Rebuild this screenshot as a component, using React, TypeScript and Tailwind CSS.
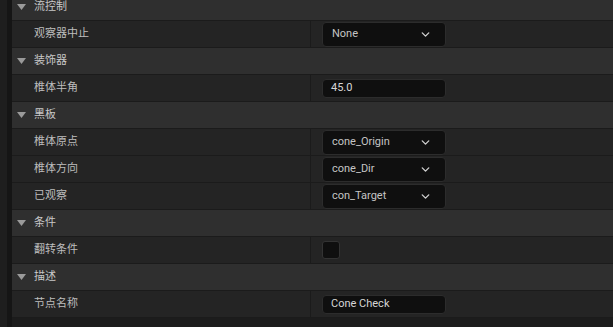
import { ChevronDown } from 'lucide-react';

type Row =
  | { kind: 'select'; label: string; value: string }
  | { kind: 'text'; label: string; value: string }
  | { kind: 'check'; label: string };

type Section = { title: string; rows: Row[] };

const sections: Section[] = [
  { title: '流控制', rows: [{ kind: 'select', label: '观察器中止', value: 'None' }] },
  { title: '装饰器', rows: [{ kind: 'text', label: '椎体半角', value: '45.0' }] },
  {
    title: '黑板',
    rows: [
      { kind: 'select', label: '椎体原点', value: 'cone_Origin' },
      { kind: 'select', label: '椎体方向', value: 'cone_Dir' },
      { kind: 'select', label: '已观察', value: 'con_Target' },
    ],
  },
  { title: '条件', rows: [{ kind: 'check', label: '翻转条件' }] },
  { title: '描述', rows: [{ kind: 'text', label: '节点名称', value: 'Cone Check' }] },
];

const font = "font-['Roboto','Noto_Sans_CJK_SC',sans-serif]";

function Value({ row }: { row: Row }) {
  if (row.kind === 'select') {
    return (
      <div className="flex h-[25px] w-[124px] items-center justify-between rounded-[4px] border border-[#2c2c2c] bg-[#0f0f0f] pr-[13px] pl-[9px] text-[11px] text-[#c4c4c4]">
        <span>{row.value}</span>
        <ChevronDown className="size-[13px] text-[#cfcfcf]" strokeWidth={2.5} />
      </div>
    );
  }

  if (row.kind === 'text') {
    return (
      <div className="flex h-[19px] w-[124px] items-center rounded-[4px] border border-[#2c2c2c] bg-[#0f0f0f] pl-[8px] text-[11px] text-[#d6d6d6]">
        {row.value}
      </div>
    );
  }

  return (
    <div className="size-[18px] rounded-[3px] border border-[#333333] bg-[#0f0f0f]" />
  );
}

export default function App() {
  return (
    <div className={`flex h-[327px] w-[613px] overflow-hidden bg-[#1c1c1c] ${font}`}>
      <div className="w-[7px] shrink-0 bg-[#1e1e1e]" />
      <div className="w-[5px] shrink-0 bg-[#151515]" />
      <div className="-mt-[6px] flex flex-1 flex-col">
        {sections.map((section) => (
          <div key={section.title}>
            <div className="flex h-[27px] items-center border-b border-[#1b1b1b] bg-[#2f2f2f] text-[11px] text-[#c8c8c8]">
              <svg className="mr-[8px] ml-[5px]" width="9" height="6" viewBox="0 0 9 6">
                <path d="M0 0h9L4.5 6z" fill="#9a9a9a" />
              </svg>
              <span>{section.title}</span>
            </div>
            {section.rows.map((row) => (
              <div
                key={row.label}
                className="flex h-[27px] border-b border-[#1b1b1b] bg-[#242424] text-[11px]"
              >
                <div className="flex w-[299px] shrink-0 items-center border-r border-[#1b1b1b] pl-[22px] text-[#bdbdbd]">
                  {row.label}
                </div>
                <div className="flex items-center pl-[11px]">
                  <Value row={row} />
                </div>
              </div>
            ))}
          </div>
        ))}
      </div>
    </div>
  );
}
